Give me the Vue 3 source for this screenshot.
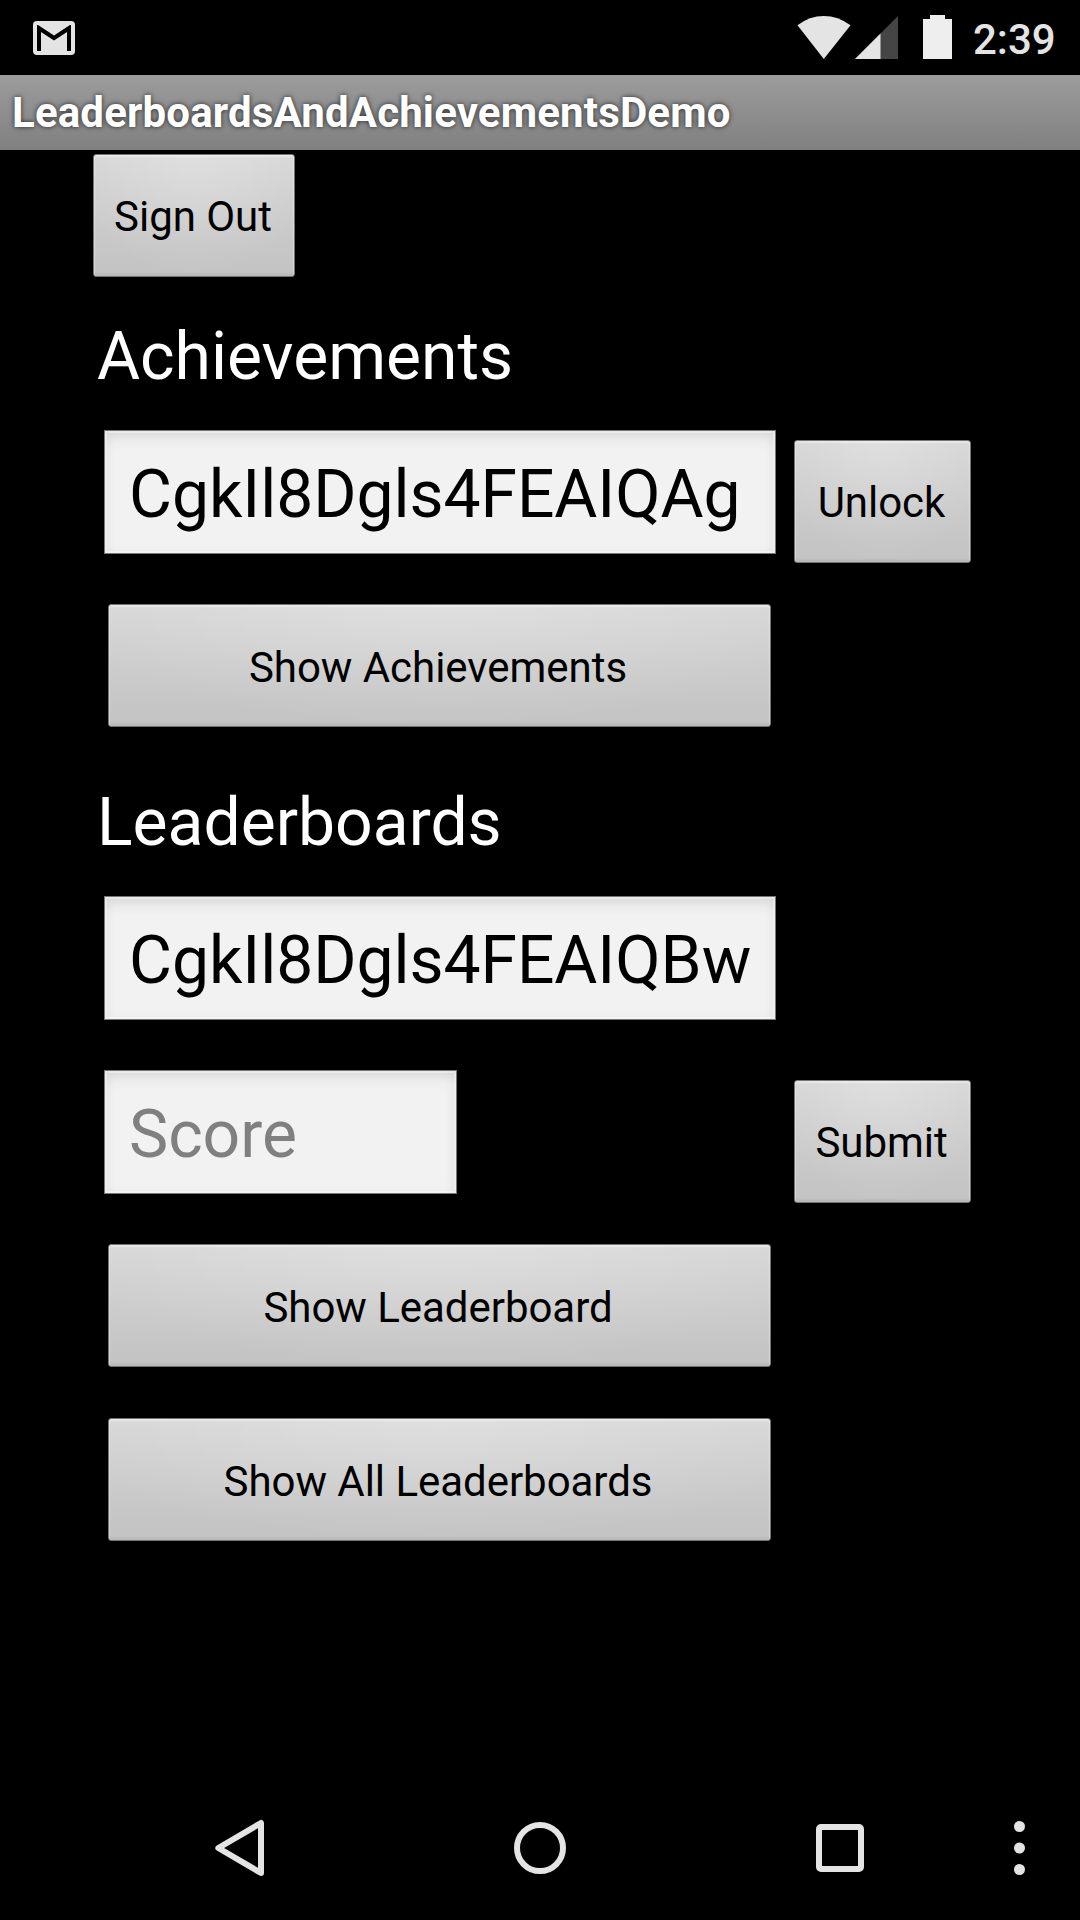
<script setup>
const title = 'LeaderboardsAndAchievementsDemo'
const achievementId = 'CgkIl8Dgls4FEAIQAg'
const leaderboardId = 'CgkIl8Dgls4FEAIQBw'
</script>

<template>
  <div class="screen">
    <header class="status">
      <svg class="mail" width="42" height="34" viewBox="0 0 42 34">
        <rect width="42" height="34" rx="4" fill="#e4e4e4" />
        <path d="M4 30V4h1L21 14.5 37 4h1v26h-4V11L21 19.500 8 11v19z" fill="#000" />
      </svg>
      <svg class="wifi" width="54" height="44" viewBox="0 0 54 44">
        <path d="M.5 10.300Q12.500 1 26.800 1T53.500 10.300L26.800 44z" fill="#e4e4e4" />
      </svg>
      <svg class="signal" width="43" height="43" viewBox="0 0 43 43">
        <path d="M43 0v43H0z" fill="#454545" />
        <path d="M25.500 17.500V43H0z" fill="#e4e4e4" />
      </svg>
      <svg class="battery" width="29" height="44" viewBox="0 0 29 44">
        <path d="M7 0h15v4h7v40H0V4h7z" fill="#eee" />
      </svg>
      <span class="clock">2:39</span>
    </header>

    <div class="titlebar">{{ title }}</div>

    <main class="content">
      <button class="btn sign">Sign Out</button>

      <h2 class="heading">Achievements</h2>
      <div class="row">
        <div class="field">{{ achievementId }}</div>
        <button class="btn side">Unlock</button>
      </div>
      <button class="btn wide">Show Achievements</button>

      <h2 class="heading">Leaderboards</h2>
      <div class="row">
        <div class="field">{{ leaderboardId }}</div>
      </div>
      <div class="row score-row">
        <div class="field score">Score</div>
        <button class="btn side">Submit</button>
      </div>
      <button class="btn wide">Show Leaderboard</button>
      <button class="btn wide last">Show All Leaderboards</button>
    </main>

    <nav class="nav">
      <svg class="back" width="50" height="58" viewBox="0 0 50 58">
        <path d="M3.300 29L46 4v50z" fill="none" stroke="#e4e4e4" stroke-width="6" stroke-linejoin="round" />
      </svg>
      <svg class="home" width="52" height="52" viewBox="0 0 52 52">
        <circle cx="26" cy="26" r="23" fill="none" stroke="#e4e4e4" stroke-width="6" />
      </svg>
      <svg class="recents" width="48" height="48" viewBox="0 0 48 48">
        <path fill-rule="evenodd" d="M5 0h38a5 5 0 0 1 5 5v38a5 5 0 0 1-5 5H5a5 5 0 0 1-5-5V5a5 5 0 0 1 5-5zM6 6v36h36V6z" fill="#e4e4e4" />
      </svg>
      <svg class="menu" width="11" height="54" viewBox="0 0 11 54">
        <circle cx="5.5" cy="5.500" r="5.500" fill="#e4e4e4" />
        <circle cx="5.5" cy="27" r="5.500" fill="#e4e4e4" />
        <circle cx="5.5" cy="48.500" r="5.500" fill="#e4e4e4" />
      </svg>
    </nav>
  </div>
</template>

<style>
body {
  margin: 0;
  background: #000;
}
</style>

<style scoped>
.screen {
  width: 1080px;
  height: 1920px;
  display: flex;
  flex-direction: column;
  background: #000;
  color: #fff;
  font-family: Roboto, sans-serif;
  overflow: hidden;
}
svg {
  display: block;
  flex: none;
}
.status {
  height: 75px;
  flex: none;
  display: flex;
  align-items: flex-start;
}
.mail {
  margin: 21px 0 0 33px;
}
.wifi {
  margin: 15px 0 0 auto;
}
.signal {
  margin: 16px 0 0 4px;
}
.battery {
  margin: 15px 0 0 25px;
}
.clock {
  width: 107px;
  margin-left: 21px;
  line-height: 79px;
  font-size: 42px;
  font-weight: 500;
  color: #e4e4e4;
}
.titlebar {
  height: 75px;
  flex: none;
  box-sizing: border-box;
  padding-left: 12px;
  line-height: 76px;
  font-size: 42px;
  font-weight: 700;
  letter-spacing: 0.16px;
  white-space: nowrap;
  background: linear-gradient(#9c9c9c, #929292 35%, #808080);
  text-shadow: 0 0 5px rgba(0, 0, 0, 0.75);
}
.content {
  flex: 1;
  display: flex;
  flex-direction: column;
  align-items: flex-start;
}
.btn {
  flex: none;
  box-sizing: border-box;
  height: 123px;
  margin: 0;
  padding: 5px 0 0;
  border: 1px solid #747474;
  border-radius: 3px;
  font: 42px/48px Roboto, sans-serif;
  letter-spacing: -0.04px;
  color: #000;
  text-align: center;
  white-space: nowrap;
  background:
    radial-gradient(ellipse 60% 100% at 50% 0, rgba(255, 255, 255, 0.22), rgba(255, 255, 255, 0)),
    linear-gradient(#d7d7d7, #c5c5c5 85%, #c4c4c4);
  background-origin: border-box;
  box-shadow:
    inset 0 3px 2px -1px rgba(255, 255, 255, 0.4),
    inset 1px 0 1px rgba(255, 255, 255, 0.35),
    inset -1px 0 1px rgba(255, 255, 255, 0.35),
    inset 0 -3px 3px -1px rgba(0, 0, 0, 0.08);
}
.sign {
  width: 202px;
  margin: 4px 0 0 93px;
  padding: 3px 2px 0 0;
}
.heading {
  height: 80px;
  margin: 40px 0 0 97px;
  font-size: 66px;
  line-height: 80px;
  font-weight: 400;
}
.row {
  display: flex;
  align-items: flex-start;
  margin: 33px 0 0 104px;
}
.field {
  box-sizing: border-box;
  width: 672px;
  height: 124px;
  padding: 4px 0 0 24px;
  border: 1px solid #777;
  font-size: 66px;
  line-height: 120px;
  letter-spacing: -0.06px;
  color: #000;
  white-space: nowrap;
  background: #f2f2f2;
  box-shadow:
    inset 0 0 0 2px rgba(255, 255, 255, 0.4),
    inset 0 8px 16px -4px rgba(0, 0, 0, 0.12),
    inset 0 0 14px rgba(0, 0, 0, 0.04);
}
.side {
  width: 177px;
  margin: 10px 0 0 18px;
  padding: 3px 2px 0 0;
}
.wide {
  width: 663px;
  margin: 41px 0 0 108px;
  padding-right: 3px;
}
.wide + .heading {
  margin-top: 56px;
}
.score-row {
  margin-top: 50px;
}
.score {
  width: 353px;
  color: #808080;
}
.score + .side {
  margin-left: 337px;
}
.last {
  margin-top: 51px;
}
.nav {
  height: 144px;
  flex: none;
  display: flex;
  align-items: center;
}
.back {
  margin-left: 215px;
}
.home {
  margin-left: 249px;
}
.recents {
  margin-left: 250px;
}
.menu {
  margin-left: 150px;
}
</style>
